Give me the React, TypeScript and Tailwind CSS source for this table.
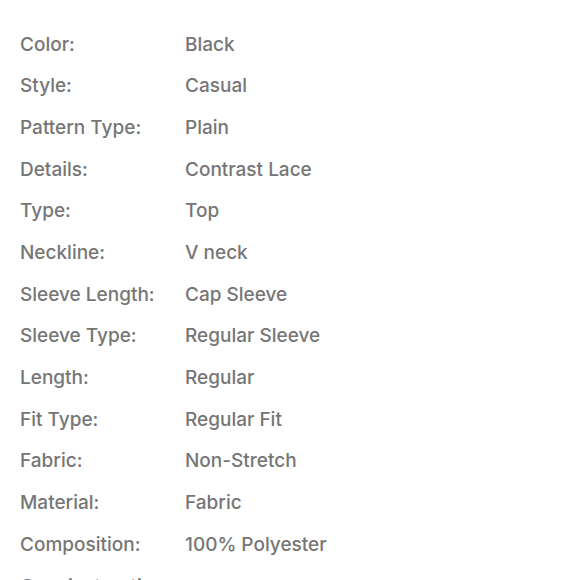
const specs: [string, string][] = [
  ['Color:', 'Black'],
  ['Style:', 'Casual'],
  ['Pattern Type:', 'Plain'],
  ['Details:', 'Contrast Lace'],
  ['Type:', 'Top'],
  ['Neckline:', 'V neck'],
  ['Sleeve Length:', 'Cap Sleeve'],
  ['Sleeve Type:', 'Regular Sleeve'],
  ['Length:', 'Regular'],
  ['Fit Type:', 'Regular Fit'],
  ['Fabric:', 'Non-Stretch'],
  ['Material:', 'Fabric'],
  ['Composition:', '100% Polyester'],
  ['Care instructions:', ''],
];

export default function App() {
  return (
    <div className="h-[580px] w-[580px] overflow-hidden bg-white font-['Inter',sans-serif] text-[19px] font-medium text-[#767676]">
      <div className="pt-[24px] pl-5">
        {specs.map(([label, value]) => (
          <div key={label} className="flex h-[41.7px] items-center">
            <span className="w-[165px] shrink-0">{label}</span>
            <span className="whitespace-nowrap">{value}</span>
          </div>
        ))}
      </div>
    </div>
  );
}
